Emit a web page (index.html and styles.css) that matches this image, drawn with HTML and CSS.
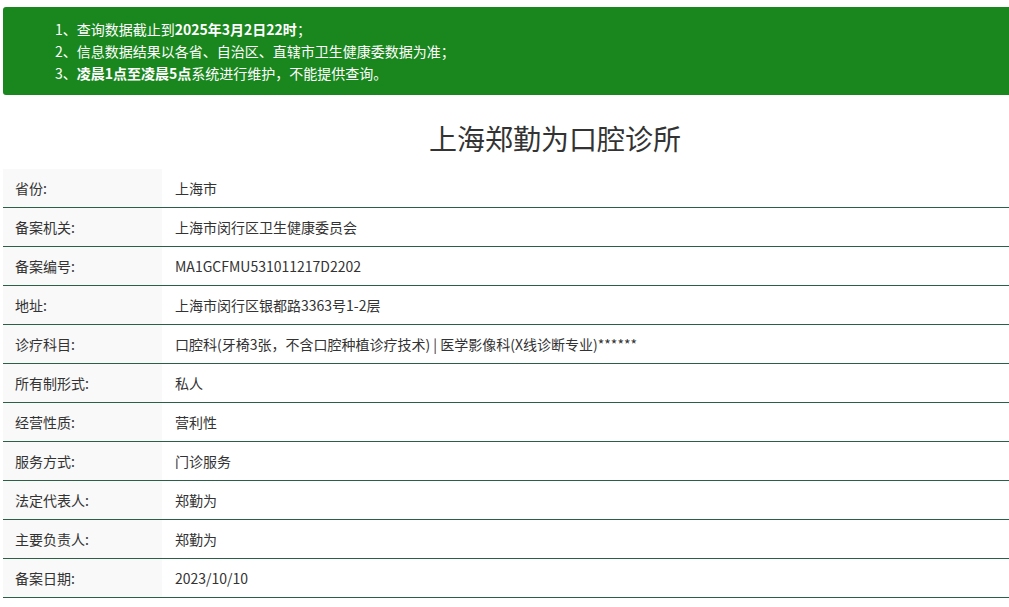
FILE: index.html
```html
<!DOCTYPE html>
<html lang="zh-CN">
<head>
<meta charset="utf-8">
<title>上海郑勤为口腔诊所</title>
<link rel="stylesheet" href="styles.css">
</head>
<body>
<div class="page">
  <div class="notice">
    <p>1、查询数据截止到<b>2025年3月2日22时</b>；</p>
    <p>2、信息数据结果以各省、自治区、直辖市卫生健康委数据为准；</p>
    <p>3、<b>凌晨1点至凌晨5点</b>系统进行维护，不能提供查询。</p>
  </div>
  <h1 class="title">上海郑勤为口腔诊所</h1>
  <div class="table">
    <div class="row"><div class="label">省份:</div><div class="value">上海市</div></div>
    <div class="row"><div class="label">备案机关:</div><div class="value">上海市闵行区卫生健康委员会</div></div>
    <div class="row"><div class="label">备案编号:</div><div class="value">MA1GCFMU531011217D2202</div></div>
    <div class="row"><div class="label">地址:</div><div class="value">上海市闵行区银都路3363号1-2层</div></div>
    <div class="row"><div class="label">诊疗科目:</div><div class="value">口腔科(牙椅3张，不含口腔种植诊疗技术) | 医学影像科(X线诊断专业)******</div></div>
    <div class="row"><div class="label">所有制形式:</div><div class="value">私人</div></div>
    <div class="row"><div class="label">经营性质:</div><div class="value">营利性</div></div>
    <div class="row"><div class="label">服务方式:</div><div class="value">门诊服务</div></div>
    <div class="row"><div class="label">法定代表人:</div><div class="value">郑勤为</div></div>
    <div class="row"><div class="label">主要负责人:</div><div class="value">郑勤为</div></div>
    <div class="row"><div class="label">备案日期:</div><div class="value">2023/10/10</div></div>
  </div>
</div>
</body>
</html>
```
FILE: styles.css
```css
html, body {
  margin: 0;
  padding: 0;
  background: #fff;
  overflow: hidden;
}
body {
  font-family: "Noto Sans CJK SC", "Microsoft YaHei", sans-serif;
  font-size: 14px;
  color: #333;
}
.page {
  width: 1104px;
  margin: 7px 0 0 3px;
}
.notice {
  background: #1a871e;
  color: #fff;
  border-radius: 3px;
  padding: 11px 0 11px 52px;
  height: 66px;
}
.notice p {
  margin: 0;
  line-height: 22px;
  font-size: 14px;
}
.notice b {
  font-weight: bold;
}
.title {
  margin: 0;
  padding: 23px 0 11px;
  line-height: 40px;
  font-size: 28px;
  font-weight: normal;
  text-align: center;
  color: #333;
}
.table {
  display: flex;
  flex-direction: column;
}
.row {
  display: flex;
  height: 38px;
  border-bottom: 1px solid #2d5e48;
}
.label {
  width: 147px;
  padding: 0 0 1px 12px;
  background: #f9f9f9;
  display: flex;
  align-items: center;
}
.value {
  flex: 1;
  padding: 0 0 1px 13px;
  display: flex;
  align-items: center;
}
```
